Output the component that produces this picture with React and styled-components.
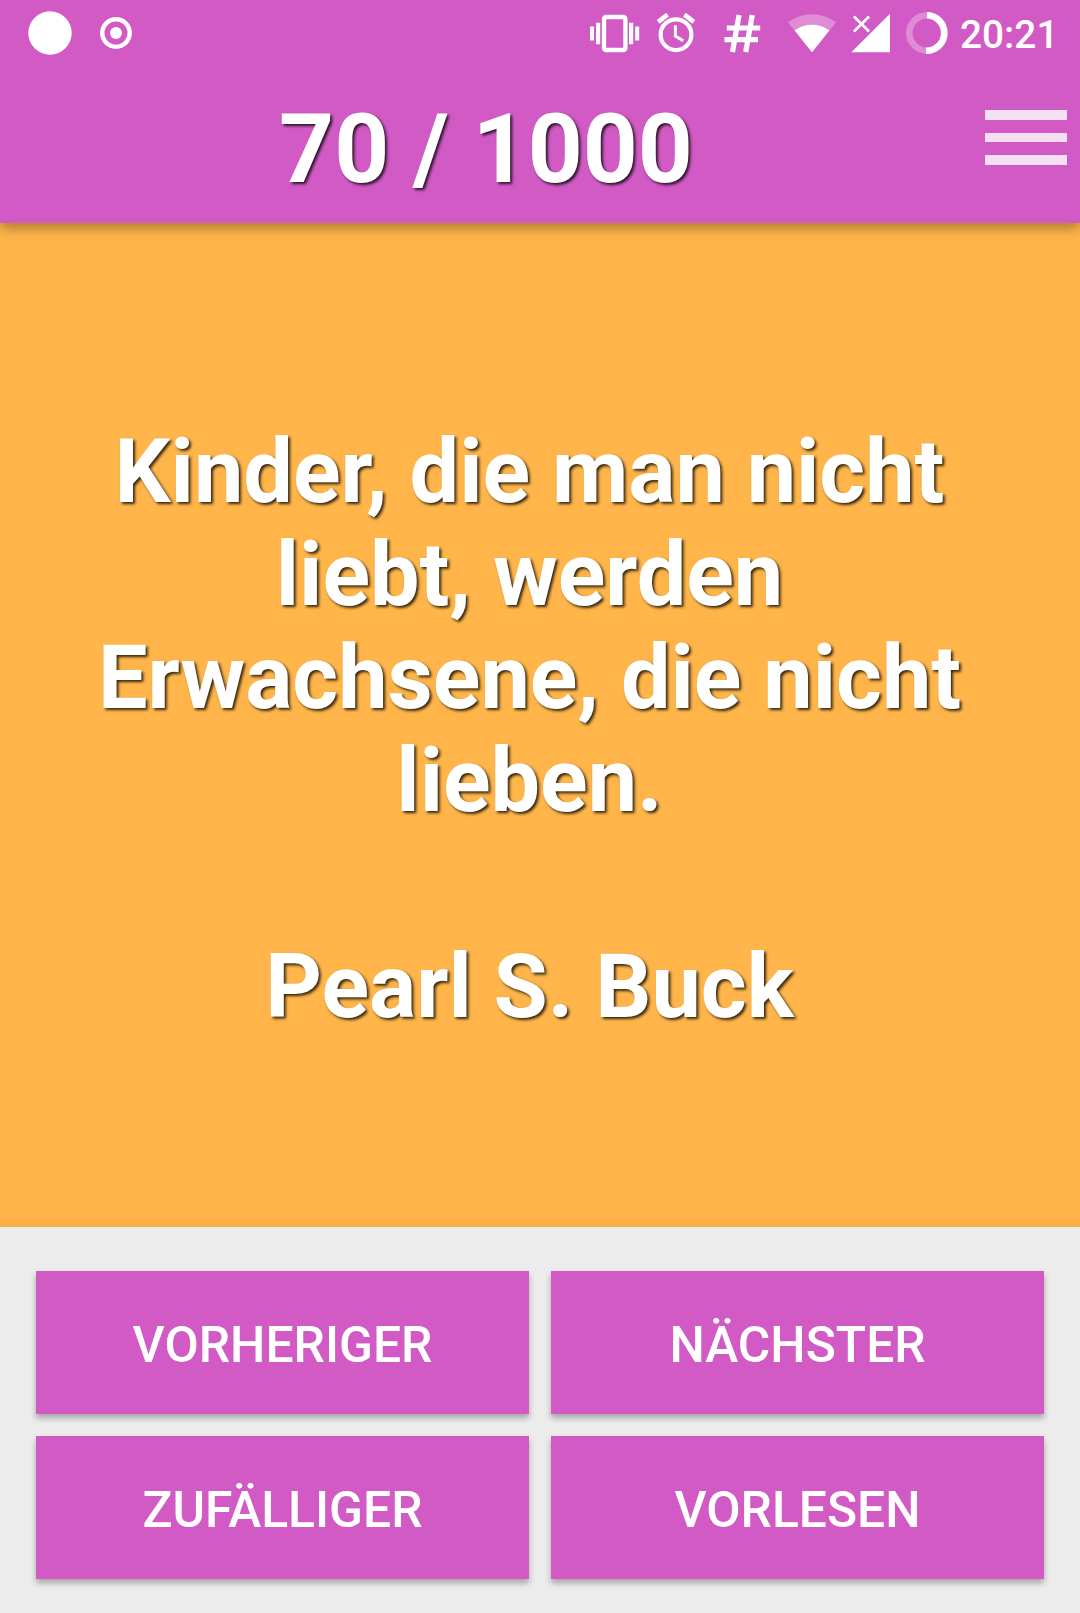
import React from "react";
import styled, { createGlobalStyle } from "styled-components";

const pink = "#d15ac5";

const actions = ["Vorheriger", "Nächster", "Zufälliger", "Vorlesen"];

export default function App() {
  return (
    <>
      <GlobalStyle />
      <Screen>
        <Header>
          <StatusBar />
          <Toolbar>
            <Counter>70 / 1000</Counter>
            <MenuButton aria-label="Menü">
              <MenuLine />
              <MenuLine />
              <MenuLine />
            </MenuButton>
          </Toolbar>
        </Header>
        <QuoteArea>
          <Quote>
            Kinder, die man nicht
            <br />
            liebt, werden
            <br />
            Erwachsene, die nicht
            <br />
            lieben.
          </Quote>
          <Author>Pearl S. Buck</Author>
        </QuoteArea>
        <Footer>
          {actions.map((action) => (
            <ActionButton key={action}>{action}</ActionButton>
          ))}
        </Footer>
      </Screen>
    </>
  );
}

function StatusBar() {
  return (
    <Status>
      <IconGroup>
        <Icon width="44" height="44" viewBox="0 0 44 44">
          <circle cx="22" cy="22" r="21.7" fill="#fff" />
        </Icon>
        <Icon width="32" height="32" viewBox="0 0 32 32">
          <circle cx="16" cy="16" r="13.7" fill="none" stroke="#fff" strokeWidth="4.4" />
          <circle cx="16" cy="16" r="6" fill="#fff" />
        </Icon>
      </IconGroup>
      <IconGroup $right>
        <VibrateIcon />
        <AlarmIcon />
        <HashIcon />
        <WifiIcon />
        <SignalIcon />
        <BatteryIcon />
        <Time>20:21</Time>
      </IconGroup>
    </Status>
  );
}

function VibrateIcon() {
  return (
    <Icon width="50" height="66" viewBox="0 0 50 66">
      <rect x="14" y="17" width="21.4" height="33" rx="2" fill="none" stroke="#fff" strokeWidth="4.3" />
      <path d="M0 26.5h4v14H0zM6 22.7h4.2v21.6H6zM39 22.7h4.2v21.6H39zM45.2 26.5h4v14h-4z" fill="#fff" />
    </Icon>
  );
}

function AlarmIcon() {
  return (
    <Icon width="40" height="66" viewBox="0 0 40 66" $left={16}>
      <circle cx="20" cy="34.7" r="15.4" fill="none" stroke="#fff" strokeWidth="4.2" />
      <path d="M2.2 21.9l9.4-7.3M28.4 14.6l9.4 7.3" fill="none" stroke="#fff" strokeWidth="4.6" />
      <path d="M19.4 25.3v10.8l7.8 4.7" fill="none" stroke="#fff" strokeWidth="3" />
    </Icon>
  );
}

function HashIcon() {
  return (
    <Icon width="38" height="66" viewBox="0 0 38 66" $left={28}>
      <path
        d="M15.1 15L8.5 52M28.3 15l-6.6 37M2.8 28h33.4M.5 39.6H34"
        fill="none"
        stroke="#fff"
        strokeWidth="5.2"
      />
    </Icon>
  );
}

function WifiIcon() {
  return (
    <Icon width="49" height="66" viewBox="0 0 49 66" $left={26}>
      <path d="M0 22.5a38.6 38.6 0 0 1 48 0L24 52.3z" fill="#fff" opacity=".3" />
      <path d="M6.7 30.5a29 29 0 0 1 34.6 0L24 52.3z" fill="#fff" />
    </Icon>
  );
}

function SignalIcon() {
  return (
    <Icon width="40" height="66" viewBox="0 0 40 66" $left={14}>
      <path d="M39 13.7V52.3H.3z" fill="#fff" />
      <path d="M3 16.5l15 15M18 16.5l-15 15" fill="none" stroke="#fff" strokeWidth="2.7" />
    </Icon>
  );
}

function BatteryIcon() {
  return (
    <Icon width="42" height="66" viewBox="0 0 42 66" $left={15}>
      <circle cx="21" cy="33" r="17.7" fill="none" stroke="#fff" strokeWidth="6.6" opacity=".3" />
      <path d="M21 15.3a17.7 17.7 0 0 1-1 35.4" fill="none" stroke="#fff" strokeWidth="6.6" />
    </Icon>
  );
}

const GlobalStyle = createGlobalStyle`
  body {
    margin: 0;
    font-family: Roboto, sans-serif;
  }
`;

const Screen = styled.div`
  display: flex;
  flex-direction: column;
  width: 1080px;
  height: 1613px;
  overflow: hidden;
  color: #fff;
  background-color: #ececec;
`;

const Header = styled.header`
  position: relative;
  z-index: 1;
  flex: none;
  box-sizing: border-box;
  height: 223px;
  background-color: ${pink};
  box-shadow: 0 5px 12px rgba(0, 0, 0, 0.33);
`;

const Status = styled.div`
  box-sizing: border-box;
  display: flex;
  justify-content: space-between;
  height: 66px;
  padding: 0 23px 0 28px;
`;

const IconGroup = styled.div`
  display: flex;
  align-items: center;
  gap: ${({ $right }) => ($right ? "0" : "28px")};
`;

const Icon = styled.svg`
  flex: none;
  margin-left: ${({ $left }) => $left || 0}px;
`;

const Time = styled.span`
  width: 97px;
  margin-left: 12px;
  padding-top: 3px;
  font-size: 38.8px;
  font-weight: 500;
  line-height: 48px;
  white-space: nowrap;
`;

const Toolbar = styled.div`
  display: flex;
  justify-content: space-between;
  height: 157px;
`;

const Counter = styled.h1`
  flex: 1;
  margin: 0;
  padding: 27px 0 0 2px;
  font-size: 96px;
  font-weight: 700;
  line-height: 112px;
  text-align: center;
  text-shadow: 2px 2px 3px rgba(0, 0, 0, 0.8);
`;

const MenuButton = styled.button`
  display: flex;
  flex-direction: column;
  gap: 12.8px;
  width: 110px;
  padding: 44.2px 13.5px 0 15px;
  border: none;
  background-color: transparent;
`;

const MenuLine = styled.span`
  flex: none;
  width: 81.5px;
  height: 9.7px;
  background-color: #f4e0f2;
`;

const QuoteArea = styled.main`
  box-sizing: border-box;
  flex: none;
  height: 1004px;
  padding: 198px 21px 0 0;
  font-size: 88.1px;
  font-weight: 700;
  line-height: 103px;
  text-align: center;
  text-shadow: 2px 2px 3px rgba(0, 0, 0, 0.8);
  background: linear-gradient(to top, #f9ab45, #ffb549 12px);
`;

const Quote = styled.p`
  margin: 0;
`;

const Author = styled.p`
  margin: 103px 0 0;
`;

const Footer = styled.footer`
  display: grid;
  grid-template-columns: 493px 493px;
  grid-auto-rows: 143px;
  gap: 22px;
  padding: 44px 36px 0;
`;

const ActionButton = styled.button`
  padding: 4px 0 0;
  border: none;
  color: #fff;
  font-family: inherit;
  font-size: 49.8px;
  font-weight: 500;
  text-transform: uppercase;
  background-color: ${pink};
  box-shadow: 0 4px 6px rgba(0, 0, 0, 0.3);
`;
